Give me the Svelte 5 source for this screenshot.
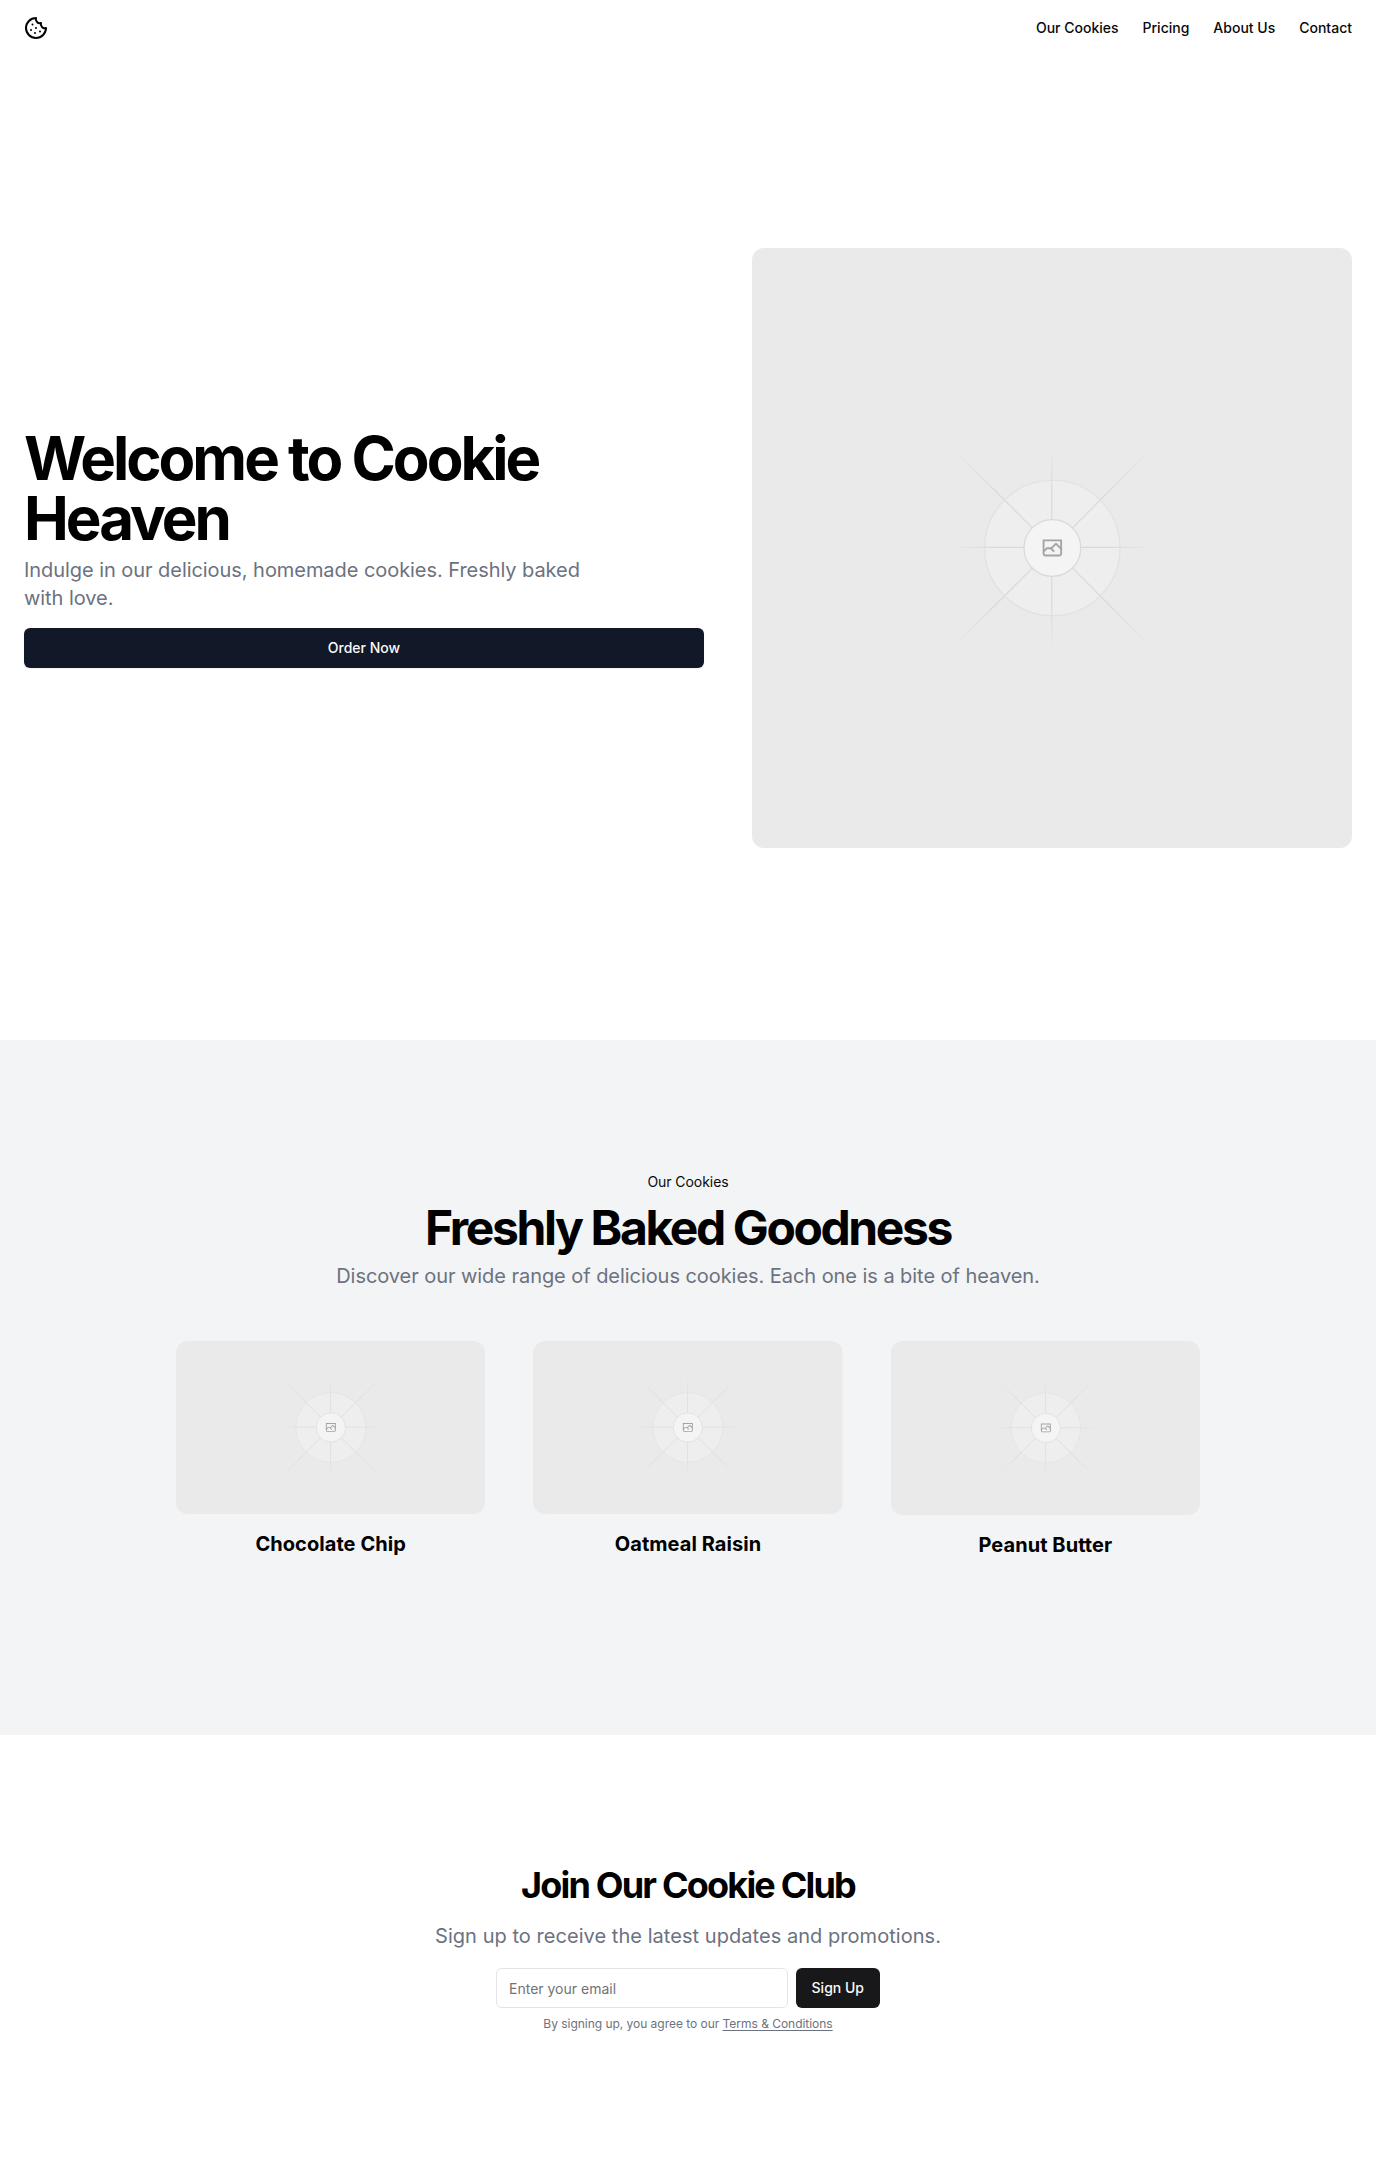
<script>
  const links = ['Our Cookies', 'Pricing', 'About Us', 'Contact'];
  const cookies = ['Chocolate Chip', 'Oatmeal Raisin', 'Peanut Butter'];
</script>

{#snippet placeholder(id)}
  <svg class="placeholder" viewBox="0 0 1200 1200" preserveAspectRatio="xMidYMid slice" fill="none" aria-hidden="true">
    <defs>
      <linearGradient id="{id}-long" x1="-276.8" x2="276.8" y1="0" y2="1" gradientUnits="userSpaceOnUse">
        <stop stop-color="#c9c9c9" stop-opacity="0" />
        <stop offset=".208" stop-color="#c9c9c9" />
        <stop offset=".792" stop-color="#c9c9c9" />
        <stop offset="1" stop-color="#c9c9c9" stop-opacity="0" />
      </linearGradient>
      <linearGradient id="{id}-short" x1="-196" x2="196" y1="0" y2="1" gradientUnits="userSpaceOnUse">
        <stop stop-color="#c9c9c9" stop-opacity="0" />
        <stop offset=".208" stop-color="#c9c9c9" />
        <stop offset=".792" stop-color="#c9c9c9" />
        <stop offset="1" stop-color="#c9c9c9" stop-opacity="0" />
      </linearGradient>
    </defs>
    <rect width="1200" height="1200" fill="#eaeaea" />
    <g opacity=".5">
      <g opacity=".5">
        <circle cx="600.7" cy="599.9" r="136.62" fill="#fafafa" />
        <circle cx="600.7" cy="599.9" r="135.4" stroke="#c9c9c9" stroke-width="2.418" />
      </g>
      <g stroke-width="2.418">
        <path d="M-276.8 0H276.8" stroke="url(#{id}-long)" transform="translate(600.7 599.9) rotate(45)" />
        <path d="M-276.8 0H276.8" stroke="url(#{id}-long)" transform="translate(600.7 599.9) rotate(-45)" />
        <path d="M-196 0H196" stroke="url(#{id}-short)" transform="translate(600.7 598.7)" />
        <path d="M-196 0H196" stroke="url(#{id}-short)" transform="translate(599.5 599.9) rotate(90)" />
      </g>
      <circle cx="600.7" cy="599.9" r="56.7" fill="#fff" />
      <circle cx="600.7" cy="599.9" r="56.7" stroke="#c9c9c9" stroke-width="2.418" />
    </g>
    <path
      fill="#a3a3a3"
      fill-rule="evenodd"
      clip-rule="evenodd"
      d="M616.426 586.58h-31.434v16.176l3.553-3.554.531-.531h9.068l.074-.074 8.463-8.463h2.565l7.18 7.181V586.58Zm-15.715 14.654 3.698 3.699 1.283 1.282-2.565 2.565-1.282-1.283-5.2-5.199h-6.066l-5.514 5.514-.073.073v2.876a2.418 2.418 0 0 0 2.418 2.418h26.598a2.418 2.418 0 0 0 2.418-2.418v-8.317l-8.463-8.463-7.181 7.181-.071.072Zm-19.347 5.442v4.085a6.045 6.045 0 0 0 6.046 6.045h26.598a6.044 6.044 0 0 0 6.045-6.045v-7.108l1.356-1.355-1.282-1.283-.074-.073v-17.989h-38.689v23.43l-.146.146.146.147Z"
    />
  </svg>
{/snippet}

<header>
  <a href="#home" class="logo" aria-label="Home">
    <svg width="24" height="24" viewBox="0 0 24 24" fill="none" stroke="currentColor" stroke-width="2" stroke-linecap="round" stroke-linejoin="round">
      <path d="M12 2a10 10 0 1 0 10 10 4 4 0 0 1-5-5 4 4 0 0 1-5-5" />
      <path d="M8.5 8.5v.01M16 15.5v.01M12 12v.01M11 17v.01M7 14v.01" />
    </svg>
  </a>
  <nav>
    {#each links as link}
      <a href="#top">{link}</a>
    {/each}
  </nav>
</header>

<main>
  <section class="hero">
    <div class="hero-copy">
      <h1>Welcome to Cookie Heaven</h1>
      <p class="lead">Indulge in our delicious, homemade cookies. Freshly baked with love.</p>
      <a class="order" href="#order">Order Now</a>
    </div>
    <div class="hero-image">{@render placeholder('hero')}</div>
  </section>

  <section class="range">
    <div class="label">Our Cookies</div>
    <h2>Freshly Baked Goodness</h2>
    <p class="lead">Discover our wide range of delicious cookies. Each one is a bite of heaven.</p>
    <div class="cards">
      {#each cookies as cookie, i}
        <article>
          <div class="card-image">{@render placeholder(`card${i}`)}</div>
          <h3>{cookie}</h3>
        </article>
      {/each}
    </div>
  </section>

  <section class="club">
    <h2>Join Our Cookie Club</h2>
    <p class="lead">Sign up to receive the latest updates and promotions.</p>
    <form>
      <input type="email" placeholder="Enter your email" />
      <button type="button">Sign Up</button>
    </form>
    <p class="terms">By signing up, you agree to our <a href="#terms">Terms &amp; Conditions</a></p>
  </section>
</main>

<style>
  :global(body) {
    background: #fff;
    color: #000;
    font-family: Inter, 'Liberation Sans', sans-serif;
    line-height: 1.5;
  }
  h1, h2, h3, p {
    margin: 0;
  }
  a {
    color: inherit;
    text-decoration: none;
  }
  header {
    box-sizing: border-box;
    height: 56px;
    padding: 0 24px;
    display: flex;
    align-items: center;
    justify-content: space-between;
  }
  .logo {
    display: flex;
  }
  nav {
    display: flex;
    gap: 24px;
    font-size: 14px;
    line-height: 20px;
    font-weight: 500;
    color: #09090b;
  }
  .placeholder {
    display: block;
    width: 100%;
    height: 100%;
  }
  .hero {
    padding: 192px 24px;
    display: grid;
    grid-template-columns: 1fr 600px;
    gap: 48px;
    align-items: center;
  }
  .hero-copy {
    display: flex;
    flex-direction: column;
  }
  h1 {
    font-size: 60px;
    line-height: 60px;
    font-weight: 700;
    letter-spacing: -0.05em;
  }
  .lead {
    font-size: 20px;
    line-height: 32.5px;
    letter-spacing: -0.055px;
    color: #6b7280;
  }
  .hero .lead {
    margin-top: 8px;
    max-width: 600px;
    line-height: 28px;
  }
  .order {
    margin-top: 16px;
    height: 40px;
    border-radius: 6px;
    background: #111827;
    color: #f9fafb;
    font-size: 14px;
    line-height: 20px;
    font-weight: 500;
    display: flex;
    align-items: center;
    justify-content: center;
    box-shadow: 0 1px 2px rgb(0 0 0 / 0.05);
  }
  .hero-image {
    height: 600px;
    border-radius: 12px;
    overflow: hidden;
  }
  .range {
    padding: 128px 24px;
    background: #f3f4f6;
    display: flex;
    flex-direction: column;
    align-items: center;
  }
  .label {
    padding: 4px 12px;
    font-size: 14px;
    line-height: 20px;
    letter-spacing: -0.06px;
    color: #09090b;
  }
  .range h2 {
    margin: 8px 0;
    font-size: 48px;
    line-height: 48px;
    font-weight: 700;
    letter-spacing: -0.05em;
  }
  .cards {
    width: 1024px;
    padding: 48px 0;
    display: grid;
    grid-template-columns: repeat(3, 1fr);
    gap: 48px;
  }
  article {
    display: flex;
    flex-direction: column;
    gap: 16px;
  }
  .card-image {
    height: 173px;
    border-radius: 12px;
    overflow: hidden;
  }
  article:last-child .card-image {
    height: 174px;
  }
  h3 {
    font-size: 20px;
    line-height: 28px;
    font-weight: 700;
    letter-spacing: 0.06px;
    text-align: center;
  }
  .club {
    padding: 128px 24px;
    display: flex;
    flex-direction: column;
    align-items: center;
  }
  .club h2 {
    margin-bottom: 12px;
    font-size: 36px;
    line-height: 45px;
    font-weight: 700;
    letter-spacing: -0.05em;
  }
  .club .lead {
    letter-spacing: 0.045px;
  }
  form {
    width: 384px;
    margin: 16px 0 8px;
    display: flex;
    gap: 8px;
  }
  input {
    box-sizing: border-box;
    flex: 1;
    min-width: 0;
    height: 40px;
    padding: 8px 12px;
    border: 1px solid #e4e4e7;
    border-radius: 6px;
    background: #fff;
    font: 400 14px/20px Inter, sans-serif;
  }
  input::placeholder {
    color: #71717a;
    opacity: 1;
  }
  button {
    height: 40px;
    padding: 8px 16px;
    border: 0;
    border-radius: 6px;
    background: #18181b;
    color: #fafafa;
    font: 500 14px/20px Inter, sans-serif;
  }
  .terms {
    font-size: 12px;
    line-height: 16px;
    letter-spacing: -0.03px;
    color: #6b7280;
  }
  .terms a {
    text-decoration: underline;
    text-underline-offset: 2px;
  }
</style>
